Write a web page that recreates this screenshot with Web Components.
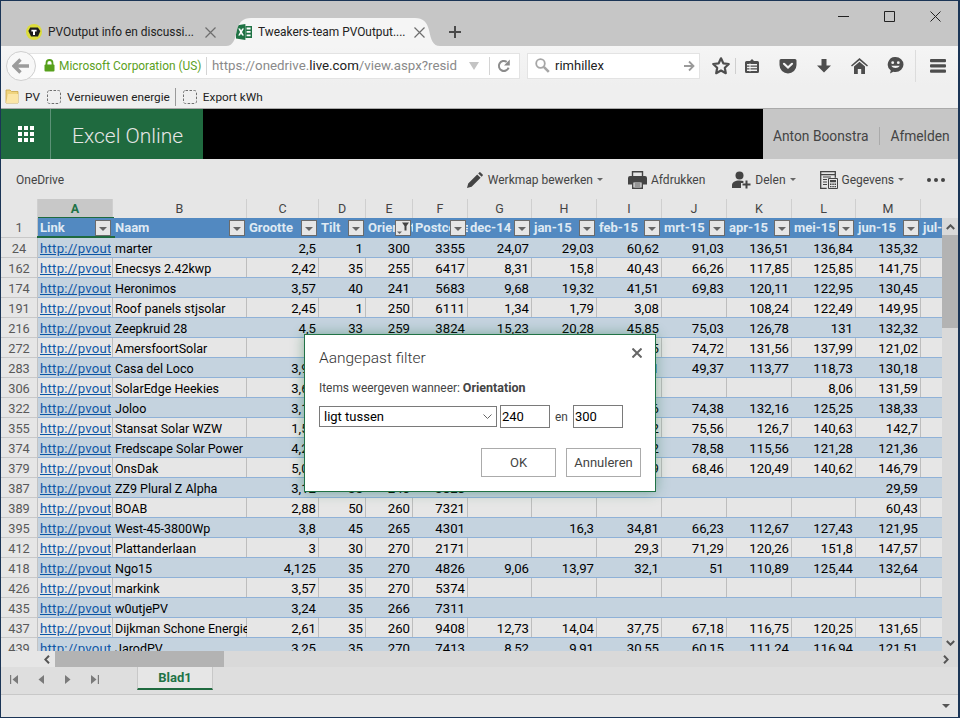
<!DOCTYPE html>
<html lang="nl">
<head>
<meta charset="utf-8">
<title>Excel Online</title>
<style>
  html, body { margin: 0; padding: 0; background: #e6e6e6; }
  body { width: 960px; height: 718px; overflow: hidden; font-family: Roboto, "Noto Sans", sans-serif; }
</style>
</head>
<body>
<app-window>
  <browser-tabs></browser-tabs>
  <browser-nav></browser-nav>
  <bookmark-bar></bookmark-bar>
  <excel-header></excel-header>
  <command-bar></command-bar>
  <sheet-grid></sheet-grid>
  <sheet-tabs></sheet-tabs>
  <filter-dialog></filter-dialog>
</app-window>

<script>
// 1. Icons
const ICONS = {
  tweakers: `<svg viewBox="0 0 16 16" width="16" height="16"><circle cx="8" cy="8" r="8" fill="#dcdc3c"/><path d="M4.200 3.400h7.600l2.600 3.600-2.400 5.600H5L2.400 7z" fill="#1c1c1c"/><path d="M5.400 5.800h5.200v1.800H9V11H7V7.600H5.400z" fill="#fff"/></svg>`,
  excel: `<svg viewBox="0 0 16 16" width="16" height="16"><path d="M0 1.600 9.400 0v16L0 14.400z" fill="#1f7244"/><path d="M9.400 2H16v12H9.400z" fill="#1f7244"/><path d="M10.600 3.600h4v1.800h-4zM10.600 7h4v1.800h-4zM10.600 10.400h4v1.800h-4z" fill="#fff"/><path d="M2.200 4.400h1.900l1 2.200 1.100-2.200H8L6 8l2 3.600H6.100L5 9.400l-1 2.200H2.200L4.100 8z" fill="#fff"/></svg>`,
  lock: `<svg viewBox="0 0 11 13" width="11" height="13"><path d="M2.500 6V4a3 3 0 0 1 6 0v2" fill="none" stroke="#57a01c" stroke-width="1.800"/><rect x="0.500" y="5.500" width="10" height="7" rx="1" fill="#57a01c"/></svg>`,
  back: `<svg viewBox="0 0 18 16" width="18" height="16"><path d="M8.500 1.500 2 8l6.500 6.500M2.500 8H17" fill="none" stroke="#9b9b9b" stroke-width="3.400"/></svg>`,
  reload: `<svg viewBox="0 0 14 14" width="14" height="14"><path d="M11.600 8.600A5 5 0 1 1 9.700 2.800" fill="none" stroke="#8c8c8c" stroke-width="2"/><path d="M12.800 0.600v5.800H7z" fill="#8c8c8c"/></svg>`,
  search: `<svg viewBox="0 0 15 15" width="15" height="15"><circle cx="5.500" cy="5.500" r="4.300" fill="none" stroke="#a6a6a6" stroke-width="1.800"/><path d="m8.800 8.800 5 5" stroke="#a6a6a6" stroke-width="2.600"/></svg>`,
  go: `<svg viewBox="0 0 12 12" width="12" height="12"><path d="M6 1.500 10.500 6 6 10.500M10 6H1" fill="none" stroke="#9a9a9a" stroke-width="1.800"/></svg>`,
  star: `<svg viewBox="0 0 20 20" width="20" height="20"><path d="m10 2.300 2.300 5 5.500.7-4 3.800 1 5.400-4.800-2.700-4.800 2.700 1-5.400-4-3.800 5.500-.7z" fill="none" stroke="#4d4d4d" stroke-width="2.200" stroke-linejoin="round"/></svg>`,
  list: `<svg viewBox="0 0 16 16" width="16" height="16"><path d="M2.500 3H6l2-2 2 2h3.500A1.500 1.500 0 0 1 15 4.500v9a1.500 1.500 0 0 1-1.500 1.500h-11A1.500 1.500 0 0 1 1 13.500v-9A1.500 1.500 0 0 1 2.500 3z" fill="#4d4d4d"/><path d="M3 6h10v1.500H3zM3 8.700h10v1.500H3zM3 11.400h10v1.500H3z" fill="#f3f3f3"/><path d="M5.500 5.500h1v8h-1z" fill="#f3f3f3"/></svg>`,
  pocket: `<svg viewBox="0 0 18 16" width="18" height="16"><path d="M2 1h14a1.500 1.500 0 0 1 1.500 1.500V7A8.500 8.500 0 0 1 .5 7V2.500A1.500 1.500 0 0 1 2 1z" fill="#4d4d4d"/><path d="m5 5.800 4 3.800 4-3.800" fill="none" stroke="#f3f3f3" stroke-width="2.200" stroke-linecap="round"/></svg>`,
  download: `<svg viewBox="0 0 16 16" width="16" height="16"><path d="M5.500 1h5v6.500H15L8 14.500 1 7.500h4.500z" fill="#4d4d4d"/></svg>`,
  home: `<svg viewBox="0 0 17 16" width="17" height="16"><path d="M8.500 0 17 7.500l-1 1.100-7.500-6.300L1 8.600 0 7.500z" fill="#4d4d4d"/><path d="M8.500 3.800 14 8.500V16h-3.800v-5H6.800v5H3V8.500z" fill="#4d4d4d"/></svg>`,
  smiley: `<svg viewBox="0 0 17 17" width="17" height="17"><path d="M8.500 0a8 7.500 0 0 1 0 15c-.8 0-1.500-.1-2.200-.3L3 16.500l.8-3A7.500 7.500 0 0 1 8.500 0z" fill="#4d4d4d"/><circle cx="5.700" cy="5.700" r="1.400" fill="#f3f3f3"/><circle cx="11.300" cy="5.700" r="1.400" fill="#f3f3f3"/><path d="M4.300 8.800c1.800 3 6.600 3 8.400 0z" fill="#f3f3f3"/></svg>`,
  menu: `<svg viewBox="0 0 16 14" width="16" height="14"><rect y="0" width="16" height="3.200" rx="1" fill="#4d4d4d"/><rect y="5.300" width="16" height="3.200" rx="1" fill="#4d4d4d"/><rect y="10.600" width="16" height="3.200" rx="1" fill="#4d4d4d"/></svg>`,
  folder: `<svg viewBox="0 0 14 15" width="14" height="15"><path d="M1 1h4l1.500 1.500H13V14H1z" fill="#f0d47e" stroke="#c9a648" stroke-width=".8"/><path d="M1 14 3 5h10v9z" fill="#fbe6a6"/></svg>`,
  dashed: `<svg viewBox="0 0 14 14" width="14" height="14"><rect x=".5" y=".5" width="13" height="13" rx="2" fill="none" stroke="#6f6f6f" stroke-dasharray="2.500 1.500"/></svg>`,
  waffle: `<svg viewBox="0 0 16 16" width="16" height="16" fill="#fff"><path d="M0 0h4v4H0zM6 0h4v4H6zM12 0h4v4h-4zM0 6h4v4H0zM6 6h4v4H6zM12 6h4v4h-4zM0 12h4v4H0zM6 12h4v4H6zM12 12h4v4h-4z"/></svg>`,
  pencil: `<svg viewBox="0 0 16 16" width="16" height="16"><path d="M0 16l1.200-4.600 9-9L13.600 5.800l-9 9zM11.200 1.400l1-1a1 1 0 0 1 1.400 0l2 2a1 1 0 0 1 0 1.400l-1 1z" fill="#444"/></svg>`,
  printer: `<svg viewBox="0 0 19 18" width="19" height="18"><path d="M4.500 5V.7h10V5" fill="none" stroke="#444" stroke-width="1.400"/><path d="M2 5h15a2 2 0 0 1 2 2v6.500h-4V10H4v3.500H0V7a2 2 0 0 1 2-2z" fill="#444"/><path d="M4.700 10.700h9.600v6.600H4.700z" fill="none" stroke="#444" stroke-width="1.400"/><path d="M6.500 13h6M6.500 15h6" stroke="#444"/></svg>`,
  person: `<svg viewBox="0 0 19 18" width="19" height="18"><circle cx="7.500" cy="4.500" r="4" fill="#444"/><path d="M0 17v-2.500C0 11 3 9.500 7.500 9.500c1.500 0 2.800.2 3.900.5V12H9v5z" fill="#444"/><path d="M13.500 9.500h2v3h3v2h-3v3h-2v-3h-3v-2h3z" fill="#444"/></svg>`,
  data: `<svg viewBox="0 0 18 18" width="18" height="18"><path d="M.7.700h14.600v3H.7zM.7 3.700v13.600h6M15.300 3.700v3" fill="none" stroke="#444" stroke-width="1.300"/><path d="M3 6h8M3 8.500h4M3 11h4M3 13.500h4" stroke="#444" stroke-width="1.200"/><path d="M8.500 7.500h9v10h-9z" fill="#e6e6e6" stroke="#444"/><path d="M10 9h6v2.200h-6zM10 12.500h1.500V14H10zM12.300 12.500h1.500V14h-1.500zM14.500 12.500H16V14h-1.500zM10 15h1.500v1.300H10zM12.300 15h1.500v1.300h-1.500zM14.500 15H16v1.300h-1.500z" fill="#444"/></svg>`,
  first: `<svg viewBox="0 0 8 9" width="8" height="9"><path d="M0 0h1.200v9H0zM8 0v9L2.500 4.500z" fill="#7a7a7a"/></svg>`,
  prev: `<svg viewBox="0 0 6 9" width="6" height="9"><path d="M6 0v9L.5 4.500z" fill="#7a7a7a"/></svg>`,
  next: `<svg viewBox="0 0 6 9" width="6" height="9"><path d="M0 0v9l5.500-4.500z" fill="#7a7a7a"/></svg>`,
  last: `<svg viewBox="0 0 8 9" width="8" height="9"><path d="M0 0v9l5.500-4.500zM6.800 0H8v9H6.800z" fill="#7a7a7a"/></svg>`
};

class UiIcon extends HTMLElement {
  connectedCallback() {
    const root = this.attachShadow({ mode: 'open' });
    root.innerHTML = `<style>:host { display: inline-flex; flex: none; line-height: 0; }</style>${ICONS[this.getAttribute('name')] || ''}`;
  }
}
customElements.define('ui-icon', UiIcon);

// 2. Window frame
class AppWindow extends HTMLElement {
  connectedCallback() {
    const root = this.attachShadow({ mode: 'open' });
    root.innerHTML = `<style>
      :host { display: flex; flex-direction: column; position: relative; box-sizing: border-box; width: 960px; height: 718px; border: 1px solid #1b3556; border-right-width: 2px; overflow: hidden; background: #e6e6e6; }
    </style><slot></slot>`;
  }
}
customElements.define('app-window', AppWindow);

// 3. Browser chrome
class BrowserTabs extends HTMLElement {
  connectedCallback() {
    const root = this.attachShadow({ mode: 'open' });
    const cross = `<svg viewBox="0 0 11 11" width="11" height="11"><path d="M.5.500l10 10M10.500.500l-10 10" stroke="#6e6e6e" stroke-width="1.200"/></svg>`;
    root.innerHTML = `<style>
      :host { display: block; height: 45px; background: #c6c6c6; position: relative; font-size: 11.900px; color: #222; }
      .strip { position: absolute; left: 0; right: 0; bottom: 0; height: 28px; display: flex; align-items: center; }
      .tab { flex: none; display: flex; align-items: center; height: 28px; box-sizing: border-box; }
      .one { width: 225px; padding-left: 25px; }
      .two { width: 214px; padding-left: 10px; background: #f5f5f5; clip-path: path("M0 28C7 28 9 22 11 12 13 4 17 0 25 0L189 0C197 0 201 4 203 12 205 22 207 28 214 28Z"); }
      .label { margin-left: 6px; white-space: nowrap; overflow: hidden; flex: none; }
      .one .label { width: 146px; }
      .two .label { width: 148px; }
      .one svg { margin-left: 11px; }
      .two svg { margin-left: 8px; }
      .plus { margin-left: 9px; width: 12px; height: 12px; }
      .controls { position: absolute; top: 10px; right: 17px; display: flex; align-items: center; gap: 35px; }
    </style>
    <div class="controls">
      <svg width="11" height="11" viewBox="0 0 11 11"><path d="M0 5.500h11" stroke="#222"/></svg>
      <svg width="11" height="11" viewBox="0 0 11 11"><path d="M.5.500h10v10H.5z" fill="none" stroke="#222"/></svg>
      <svg width="11" height="11" viewBox="0 0 11 11"><path d="M.5.500l10 10M10.500.500l-10 10" stroke="#222"/></svg>
    </div>
    <div class="strip">
      <div class="tab one"><ui-icon name="tweakers"></ui-icon><span class="label">PVOutput info en discussi...</span>${cross}</div>
      <div class="tab two"><ui-icon name="excel"></ui-icon><span class="label">Tweakers-team PVOutput....</span>${cross}</div>
      <svg class="plus" viewBox="0 0 12 12"><path d="M6 0v12M0 6h12" stroke="#4a4a4a" stroke-width="2"/></svg>
    </div>`;
  }
}
customElements.define('browser-tabs', BrowserTabs);

class BrowserNav extends HTMLElement {
  connectedCallback() {
    const root = this.attachShadow({ mode: 'open' });
    root.innerHTML = `<style>
      :host { display: flex; align-items: center; height: 39px; background: linear-gradient(#f5f5f5, #efefef); font-size: 11.900px; box-sizing: border-box; padding-left: 5px; }
      .back { flex: none; position: relative; z-index: 1; width: 30px; height: 30px; box-sizing: border-box; border-radius: 50%; background: #f8f8f8; border: 1px solid #cfcfcf; display: flex; align-items: center; justify-content: center; }
      .url { flex: none; margin-left: -14px; width: 498px; height: 26px; box-sizing: border-box; background: #fff; border: 1px solid #e3e3e3; display: flex; align-items: center; padding-left: 21px; }
      .green { color: #5b9f1e; margin-left: 4px; white-space: nowrap; width: 147px; flex: none; }
      .sep { flex: none; width: 1px; height: 18px; background: #d4d4d4; }
      .addr { font-size: 13.300px; color: #8a8a8a; margin-left: 5px; white-space: nowrap; width: 249px; flex: none; overflow: hidden; }
      .addr b { font-weight: 400; color: #222; }
      .tri { flex: none; margin-left: 8px; width: 0; height: 0; border: 5px solid transparent; border-top: 8px solid #c4c4c4; border-bottom: 0; }
      .rel { margin: 0 0 0 7px; }
      .search { flex: none; margin-left: 7px; width: 173px; height: 26px; box-sizing: border-box; background: #fff; border: 1px solid #e3e3e3; display: flex; align-items: center; padding-left: 7px; font-size: 13px; color: #222; }
      .search span { margin-left: 5px; flex: 1; }
      .search .go { margin-right: 4px; }
      .tools { flex: 1; display: flex; align-items: center; position: relative; height: 28px; padding-left: 11px; }
      .divider { width: 1px; height: 16px; background: #cfcfcf; margin: 0 8px 0 4px; }
      .divider2 { width: 1px; height: 32px; background: #dcdcdc; margin: 0 14px 0 11px; }
      .gap { margin-left: 19px; }
    </style>
    <div class="back"><ui-icon name="back"></ui-icon></div>
    <div class="url">
      <ui-icon name="lock"></ui-icon><span class="green">Microsoft Corporation (US)</span><span class="sep"></span>
      <span class="addr">https://onedrive.<b>live.com</b>/view.aspx?resid</span>
      <span class="tri"></span><span class="sep" style="margin-left:10px"></span>
      <ui-icon class="rel" name="reload"></ui-icon>
    </div>
    <div class="search"><ui-icon name="search"></ui-icon><span>rimhillex</span><ui-icon class="go" name="go"></ui-icon></div>
    <div class="tools">
      <ui-icon name="star"></ui-icon><span class="divider"></span>
      <ui-icon name="list"></ui-icon>
      <ui-icon class="gap" name="pocket"></ui-icon>
      <ui-icon class="gap" name="download"></ui-icon>
      <ui-icon class="gap" name="home"></ui-icon>
      <ui-icon class="gap" name="smiley"></ui-icon>
      <span class="divider2"></span>
      <ui-icon name="menu"></ui-icon>
    </div>`;
  }
}
customElements.define('browser-nav', BrowserNav);

class BookmarkBar extends HTMLElement {
  connectedCallback() {
    const root = this.attachShadow({ mode: 'open' });
    root.innerHTML = `<style>
      :host { display: flex; align-items: center; height: 23px; background: #efefef; border-bottom: 1px solid #aaa; font-size: 11.800px; color: #222; padding-left: 4px; box-sizing: content-box; white-space: nowrap; }
      span { margin-left: 6px; }
      .sep { width: 1px; height: 18px; background: #9a9a9a; margin: 0 7px 0 5px; }
      .b { margin-left: 7px; }
    </style>
    <ui-icon name="folder"></ui-icon><span>PV</span>
    <ui-icon class="b" name="dashed"></ui-icon><span>Vernieuwen energie</span>
    <span class="sep"></span>
    <ui-icon name="dashed"></ui-icon><span>Export kWh</span>`;
  }
}
customElements.define('bookmark-bar', BookmarkBar);

// 4. Excel header and command bar
class ExcelHeader extends HTMLElement {
  connectedCallback() {
    const root = this.attachShadow({ mode: 'open' });
    root.innerHTML = `<style>
      :host { display: flex; height: 50px; background: #000; }
      .brand { flex: none; width: 202px; display: flex; align-items: center; background: #1f6a3f; color: #e6e6e6; }
      .waffle { width: 50px; height: 100%; box-sizing: border-box; border-right: 1px solid #5c9277; display: flex; align-items: center; justify-content: center; }
      .title { font-weight: 300; font-size: 21px; margin: 3px 0 0 21px; white-space: nowrap; }
      .fill { flex: 1; }
      .user { flex: none; width: 195px; background: #c6c6c6; color: #444; font-size: 13.800px; display: flex; align-items: center; box-sizing: border-box; padding: 4px 0 0 10px; white-space: nowrap; }
      .user i { width: 1px; height: 18px; background: #aaa; margin: 0 10px 0 11px; }
    </style>
    <div class="brand"><div class="waffle"><ui-icon name="waffle"></ui-icon></div><div class="title">Excel Online</div></div>
    <div class="fill"></div>
    <div class="user"><span>Anton Boonstra</span><i></i><span>Afmelden</span></div>`;
  }
}
customElements.define('excel-header', ExcelHeader);

class CmdItem extends HTMLElement {
  connectedCallback() {
    const root = this.attachShadow({ mode: 'open' });
    const caret = this.hasAttribute('caret') ? '<span class="caret"></span>' : '';
    const icon = this.getAttribute('icon');
    root.innerHTML = `<style>
      :host { display: inline-flex; align-items: center; white-space: nowrap; }
      ui-icon { margin-right: var(--gap, 4px); }
      .caret { width: 0; height: 0; border: 3px solid transparent; border-top: 3px solid #666; border-bottom: 0; margin-left: 4px; }
    </style>${icon ? `<ui-icon name="${icon}"></ui-icon>` : ''}<slot></slot>${caret}`;
  }
}
customElements.define('cmd-item', CmdItem);

class CommandBar extends HTMLElement {
  connectedCallback() {
    const root = this.attachShadow({ mode: 'open' });
    root.innerHTML = `<style>
      :host { display: flex; align-items: center; height: 40px; background: #e6e6e6; color: #444; font-size: 12px; padding: 1px 13px 0 15px; box-sizing: border-box; }
      .left { flex: 1; }
      .dots { display: flex; gap: 3px; margin-left: 23px; }
      .dots i { width: 4px; height: 4px; border-radius: 50%; background: #444; }
      cmd-item + cmd-item { margin-left: 25px; }
      .edit { --gap: 5px; }
      .share { margin-left: 27px !important; }
      .data { margin-left: 24px !important; }
    </style>
    <div class="left">OneDrive</div>
    <cmd-item class="edit" icon="pencil" caret>Werkmap bewerken</cmd-item>
    <cmd-item icon="printer">Afdrukken</cmd-item>
    <cmd-item class="share" icon="person" caret>Delen</cmd-item>
    <cmd-item class="data" icon="data" caret>Gegevens</cmd-item>
    <div class="dots"><i></i><i></i><i></i></div>`;
  }
}
customElements.define('command-bar', CommandBar);

// 5. Spreadsheet
const COLS = [
  ['A', 75, 'Link'], ['B', 134, 'Naam'], ['C', 72, 'Grootte'], ['D', 47, 'Tilt'], ['E', 47, 'Orientation'],
  ['F', 55, 'Postcode'], ['G', 64, 'dec-14'], ['H', 65, 'jan-15'], ['I', 65, 'feb-15'], ['J', 65, 'mrt-15'],
  ['K', 65, 'apr-15'], ['L', 64, 'mei-15'], ['M', 65, 'jun-15'], ['N', 21, 'jul-15']
];
// D..H of the rows behind the dialog can't be read in the picture, left empty
const ROWS = [
  [24, 'marter', '2,5', '1', '300', '3355', '24,07', '29,03', '60,62', '91,03', '136,51', '136,84', '135,32'],
  [162, 'Enecsys 2.42kwp', '2,42', '35', '255', '6417', '8,31', '15,8', '40,43', '66,26', '117,85', '125,85', '141,75'],
  [174, 'Heronimos', '3,57', '40', '241', '5683', '9,68', '19,32', '41,51', '69,83', '120,11', '122,95', '130,45'],
  [191, 'Roof panels stjsolar', '2,45', '1', '250', '6111', '1,34', '1,79', '3,08', '', '108,24', '122,49', '149,95'],
  [216, 'Zeepkruid 28', '4,5', '33', '259', '3824', '15,23', '20,28', '45,85', '75,03', '126,78', '131', '132,32'],
  [272, 'AmersfoortSolar', '', '', '', '', '', '', '40,35', '74,72', '131,56', '137,99', '121,02'],
  [283, 'Casa del Loco', '3,96', '', '', '', '', '', '30,31', '49,37', '113,77', '118,73', '130,18'],
  [306, 'SolarEdge Heekies', '3,68', '', '', '', '', '', '', '', '', '8,06', '131,59'],
  [322, 'Joloo', '3,12', '', '', '', '', '', '40,16', '74,38', '132,16', '125,25', '138,33'],
  [355, 'Stansat Solar WZW', '1,56', '', '', '', '', '', '38,22', '75,56', '126,7', '140,63', '142,7'],
  [374, 'Fredscape Solar Power', '4,25', '', '', '', '', '', '42,12', '78,58', '115,56', '121,28', '121,36'],
  [379, 'OnsDak', '5,04', '', '', '', '', '', '37,89', '68,46', '120,49', '140,62', '146,79'],
  [387, 'ZZ9 Plural Z Alpha', '3,12', '35', '240', '3828', '', '', '', '', '', '', '29,59'],
  [389, 'BOAB', '2,88', '50', '260', '7321', '', '', '', '', '', '', '60,43'],
  [395, 'West-45-3800Wp', '3,8', '45', '265', '4301', '', '16,3', '34,81', '66,23', '112,67', '127,43', '121,95'],
  [412, 'Plattanderlaan', '3', '30', '270', '2171', '', '', '29,3', '71,29', '120,26', '151,8', '147,57'],
  [418, 'Ngo15', '4,125', '35', '270', '4826', '9,06', '13,97', '32,1', '51', '110,89', '125,44', '132,64'],
  [426, 'markink', '3,57', '35', '270', '5374', '', '', '', '', '', '', ''],
  [435, 'w0utjePV', '3,24', '35', '266', '7311', '', '', '', '', '', '', ''],
  [437, 'Dijkman Schone Energie', '2,61', '35', '260', '9408', '12,73', '14,04', '37,75', '67,18', '116,75', '120,25', '131,65'],
  [439, 'JarodPV', '3,25', '35', '270', '7413', '8,52', '9,91', '30,55', '60,15', '111,24', '116,94', '121,51']
];

class SheetGrid extends HTMLElement {
  connectedCallback() {
    const root = this.attachShadow({ mode: 'open' });
    const tracks = `37px ${COLS.map(c => c[1] + 'px').join(' ')}`;
    const letters = COLS.slice(0, 13).map((c, i) => `<div class="letter${i === 0 ? ' sel' : ''}">${c[0]}</div>`).join('');
    const funnel = `<svg width="14" height="14" viewBox="0 0 14 14"><path d="M6 1.500h7L10.500 5v4.500h-2V5z" fill="#444"/><path d="M1 10.500h5L3.500 13z" fill="#666"/></svg>`;
    const heads = COLS.map(c => {
      const filtered = c[0] === 'E';
      const btn = c[0] === 'N' ? '' : `<span class="fbtn${filtered ? ' on' : ''}">${filtered ? funnel : ''}</span>`;
      return `<div class="hc"><span class="ht">${c[2]}</span>${btn}</div>`;
    }).join('');
    const rows = ROWS.map((r, i) => {
      const cells = r.slice(2).map(v => `<div class="c n">${v}</div>`).join('');
      return `<div class="r ${i % 2 ? 'even' : 'odd'}"><div class="rh">${r[0]}</div><div class="c"><a>http://pvoutput.org</a></div><div class="c t">${r[1]}</div>${cells}<div class="c last"></div></div>`;
    }).join('');
    root.innerHTML = `<style>
      :host { display: block; font-size: 13.200px; color: #000; }
      .body { display: grid; grid-template-columns: 941px 16px; height: 452px; }
      .sheet { overflow: hidden; height: 452px; }
      .r, .letters, .hrow { display: grid; grid-template-columns: ${tracks}; }
      .letters { height: 19px; background: #e6e6e6; color: #444; font-size: 12.500px; line-height: 19px; text-align: center; }
      .letter { box-sizing: border-box; border-right: 1px solid #cfcfcf; border-bottom: 1px solid #bdbdbd; }
      .letter.sel { background: #c8c8c8; color: #217346; font-weight: 700; }
      .corner { border-right: 1px solid #cfcfcf; border-bottom: 1px solid #bdbdbd; box-sizing: border-box; }
      .hrow { height: 20px; line-height: 20px; background: #e6e6e6; position: relative; }
      .hrow > .rh { background: #e6e6e6; }
      .hc { background: #5289c1; color: #dfe9f3; font-weight: 700; position: relative; overflow: hidden; padding-left: 2px; white-space: nowrap; font-size: 13px; }
      .ht { display: block; }
      .fbtn { position: absolute; right: 2px; top: 2px; width: 16px; height: 16px; box-sizing: border-box; background: #e6e6e6; border: 1px solid #6b6b6b; }
      .fbtn:not(.on)::after { content: ""; position: absolute; left: 3px; top: 6px; border: 4px solid transparent; border-top: 4px solid #666; border-bottom: 0; }
      .fbtn svg { display: block; }
      .sel-top { position: absolute; left: 36px; top: 18px; width: 78px; height: 2px; background: #1f6a3f; z-index: 2; }
      .sel-line { position: absolute; left: 37px; top: -1px; width: 76px; height: 1px; background: #1f6a3f; z-index: 2; }
      .r { height: 20px; box-sizing: border-box; border-bottom: 1px solid #8fb1d7; line-height: 21px; grid-template-rows: 19px; }
      .rh { text-align: center; color: #595959; font-size: 12.800px; background: #e6e6e6; border-right: 1px solid #c3c3c3; box-shadow: inset 0 -1px 0 #c8c8c8; height: 20px; box-sizing: border-box; }
      .hrow .rh { line-height: 20px; }
      .odd .c { background: #c5d3df; }
      .even .c { background: #e6e6e6; box-shadow: inset -1px 0 0 #bdbdbd; }
      .c { overflow: hidden; white-space: nowrap; padding: 0 3px 0 2px; min-width: 0; }
      .c.n { text-align: right; }
      .c.t { font-size: 12.500px; }
      .c a { display: block; width: 71px; overflow: hidden; color: #0d56a6; text-decoration: underline; font-size: 13.200px; letter-spacing: .25px; }
      .even .c.last { box-shadow: none; }
      .vbar { background: #d9d9d9; display: flex; flex-direction: column; align-items: center; height: 433px; }
      .varrow { height: 17px; width: 100%; display: flex; align-items: center; justify-content: center; }
      .vthumb { height: 93px; width: 100%; background: #b3b3b3; }
      .vspace { flex: 1; }
      .hbar { display: flex; height: 16px; background: #d9d9d9; align-items: stretch; width: 957px; }
      .hleft { width: 37px; background: #e6e6e6; }
      .harrow { width: 17px; display: flex; align-items: center; justify-content: center; background: #e6e6e6; }
      .hthumb { width: 169px; background: #b3b3b3; }
      .hspace { flex: 1; }
      .hend { width: 24px; display: flex; align-items: center; justify-content: center; }
    </style>
    <div class="body">
      <div class="sheet">
        <div class="letters"><div class="corner"></div>${letters}<div class="letter" style="border-right:0"></div></div>
        <div class="hrow"><div class="rh">1</div>${heads}<span class="sel-top"></span><span class="sel-line"></span></div>
        ${rows}
      </div>
      <div>
        <div style="height:19px"></div>
        <div class="vbar">
          <div class="varrow"><svg width="9" height="6" viewBox="0 0 9 6"><path d="M.8 5 4.500 1.300 8.200 5" fill="none" stroke="#555" stroke-width="2"/></svg></div>
          <div class="vthumb"></div><div class="vspace"></div>
          <div class="varrow"><svg width="9" height="6" viewBox="0 0 9 6"><path d="M.8 1 4.500 4.700 8.200 1" fill="none" stroke="#555" stroke-width="2"/></svg></div>
        </div>
      </div>
    </div>
    <div class="hbar">
      <div class="hleft"></div>
      <div class="harrow"><svg width="6" height="9" viewBox="0 0 6 9"><path d="M5 .8 1.300 4.500 5 8.200" fill="none" stroke="#555" stroke-width="2"/></svg></div>
      <div class="hthumb"></div><div class="hspace"></div>
      <div class="hend"><svg width="6" height="9" viewBox="0 0 6 9"><path d="M1 .8 4.700 4.500 1 8.200" fill="none" stroke="#555" stroke-width="2"/></svg></div>
    </div>`;
  }
}
customElements.define('sheet-grid', SheetGrid);

class SheetTabs extends HTMLElement {
  connectedCallback() {
    const root = this.attachShadow({ mode: 'open' });
    root.innerHTML = `<style>
      :host { display: block; flex: 1; background: #e6e6e6; font-size: 13px; }
      .bar { height: 27px; background: #dedede; border-bottom: 1px solid #c8c8c8; display: flex; align-items: flex-start; }
      .nav { width: 136px; height: 24px; display: grid; grid-template-columns: repeat(4, 27px); margin-left: -1px; padding-right: 1px; justify-items: center; align-items: center; }
      .sheet { width: 76px; height: 23px; box-sizing: border-box; background: #e6e6e6; border-left: 1px solid #c8c8c8; border-right: 1px solid #c8c8c8; border-bottom: 2px solid #1f6a3f; color: #217346; font-weight: 700; text-align: center; line-height: 22px; }
      .foot { height: 22px; display: flex; justify-content: flex-end; align-items: center; padding-right: 8px; }
      .foot i { width: 0; height: 0; border: 4px solid transparent; border-top: 4px solid #555; border-bottom: 0; }
    </style>
    <div class="bar">
      <div class="nav"><ui-icon name="first"></ui-icon><ui-icon name="prev"></ui-icon><ui-icon name="next"></ui-icon><ui-icon name="last"></ui-icon></div>
      <div class="sheet">Blad1</div>
    </div>
    <div class="foot"><i></i></div>`;
  }
}
customElements.define('sheet-tabs', SheetTabs);

// 6. Filter dialog (lies over the sheet)
class FilterDialog extends HTMLElement {
  connectedCallback() {
    const root = this.attachShadow({ mode: 'open' });
    root.innerHTML = `<style>
      :host { position: absolute; left: 303px; top: 333px; width: 352px; height: 158px; box-sizing: border-box; background: #fff; border: 1px solid #217346; box-shadow: 0 0 12px rgba(33,115,70,.45); color: #444; padding: 12px 14px 0 14px; font-size: 11.900px; }
      .close { position: absolute; right: 13px; top: 13px; }
      h2 { margin: 0; font-weight: 300; font-size: 15.500px; line-height: 22px; color: #333; }
      p { margin: 10px 0 0; line-height: 18px; }
      p b { font-size: 12.500px; }
      .line { margin-top: 8px; display: flex; align-items: center; }
      .select { width: 178px; height: 21px; box-sizing: border-box; border: 1px solid #7a7a7a; color: #000; font-size: 13px; line-height: 19px; padding: 0 4px; display: flex; justify-content: space-between; align-items: center; }
      .input { width: 50px; height: 23px; box-sizing: border-box; border: 1px solid #7a7a7a; color: #000; font-size: 13px; line-height: 21px; padding-left: 1px; margin-left: 3px; }
      .en { margin: 0 5px; width: 13px; }
      .en + .input { margin-left: 0; }
      .buttons { margin-top: 20px; display: flex; justify-content: flex-end; gap: 10px; }
      button { width: 75px; height: 29px; box-sizing: border-box; background: #fff; border: 1px solid #ababab; color: #444; font: inherit; font-size: 13px; padding: 0; }
    </style>
    <svg class="close" width="10" height="10" viewBox="0 0 10 10"><path d="M.5.500l9 9M9.500.500l-9 9" stroke="#666" stroke-width="2"/></svg>
    <h2>Aangepast filter</h2>
    <p>Items weergeven wanneer: <b>Orientation</b></p>
    <div class="line">
      <div class="select"><span>ligt tussen</span><svg width="9" height="5" viewBox="0 0 9 5"><path d="M.5.500l4 4 4-4" fill="none" stroke="#666"/></svg></div>
      <div class="input">240</div><span class="en">en</span><div class="input">300</div>
    </div>
    <div class="buttons"><button>OK</button><button>Annuleren</button></div>`;
  }
}
customElements.define('filter-dialog', FilterDialog);
</script>
</body>
</html>
